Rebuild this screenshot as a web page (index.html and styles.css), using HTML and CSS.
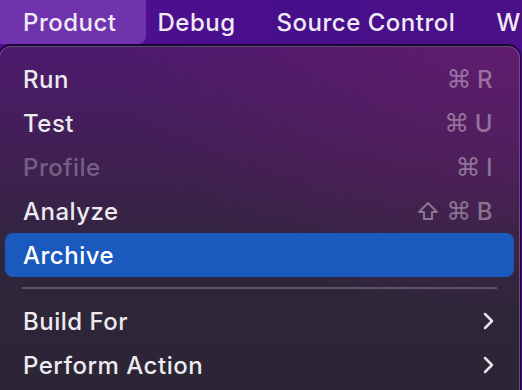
FILE: index.html
```html
<!DOCTYPE html>
<html lang="en">
<head>
    <meta charset="UTF-8">
    <title>Product Menu</title>
    <link rel="stylesheet" href="styles.css">
</head>
<body>
    <div class="menubar">
        <span class="bar-item active">Product</span>
        <span class="bar-item">Debug</span>
        <span class="bar-item">Source Control</span>
        <span class="bar-item">W</span>
    </div>
    <div class="menu">
        <div class="row">
            <span>Run</span>
            <span class="keys"><span class="cmd">⌘</span>R</span>
        </div>
        <div class="row">
            <span>Test</span>
            <span class="keys"><span class="cmd">⌘</span>U</span>
        </div>
        <div class="row disabled">
            <span>Profile</span>
            <span class="keys"><span class="cmd">⌘</span>I</span>
        </div>
        <div class="row">
            <span>Analyze</span>
            <span class="keys">
                <svg class="shift" width="22" height="20" viewBox="0 0 22 20"><path d="M11 2 L20 11 H15 V18 H7 V11 H2 Z" fill="none" stroke="currentColor" stroke-width="2" stroke-linejoin="round"/></svg>
                <span class="cmd">⌘</span>B
            </span>
        </div>
        <div class="row selected">
            <span>Archive</span>
        </div>
        <div class="separator"></div>
        <div class="row">
            <span>Build For</span>
            <svg class="chevron" width="14" height="20" viewBox="0 0 14 20"><path d="M4 3 L11 10 L4 17" fill="none" stroke="#e8e6ec" stroke-width="2.5" stroke-linecap="round" stroke-linejoin="round"/></svg>
        </div>
        <div class="row">
            <span>Perform Action</span>
            <svg class="chevron" width="14" height="20" viewBox="0 0 14 20"><path d="M4 3 L11 10 L4 17" fill="none" stroke="#e8e6ec" stroke-width="2.5" stroke-linecap="round" stroke-linejoin="round"/></svg>
        </div>
    </div>
</body>
</html>
```

FILE: styles.css
```css
html, body {
    height: 390px;
    overflow: hidden;
}
body {
    margin: 0;
    background-color: #4a0f8c;
    font-family: Inter, "Noto Sans", sans-serif;
    color: #ecebef;
}
.menubar {
    display: flex;
    height: 44px;
    background: linear-gradient(90deg, #520f93, #470f8a 60%, #4c1088);
    white-space: nowrap;
    overflow: hidden;
}
.bar-item {
    display: flex;
    align-items: center;
    padding: 0 29px 0 12px;
    font-size: 24px;
    font-weight: 500;
    letter-spacing: 0.5px;
    color: #efeaf5;
}
.bar-item.active {
    padding-left: 23px;
    background-color: #7033ad;
    border-radius: 0 0 8px 0;
}
.menu {
    box-sizing: border-box;
    margin: 2px 2px 0 -1px;
    height: 344px;
    padding: 10px 5px 0;
    border-radius: 12px 12px 0 0;
    border: 1px solid rgba(255, 255, 255, 0.22);
    border-bottom: none;
    box-shadow: 0 -1px 0 1px rgba(20, 0, 40, 0.8);
    background:
        radial-gradient(ellipse at 100% 0%, rgba(110, 30, 110, 0.55), transparent 55%),
        linear-gradient(180deg, #4d1a6e 0%, #3f2050 35%, #30263c 62%, #2c2535 100%);
}
.row {
    display: flex;
    align-items: center;
    justify-content: space-between;
    height: 44px;
    padding: 0 21px 0 18px;
    font-size: 24px;
    font-weight: 500;
    letter-spacing: 0.5px;
    border-radius: 8px;
}
.row.disabled {
    color: rgba(255, 255, 255, 0.3);
}
.row.selected {
    background-color: #1a5abf;
    color: #fff;
}
.keys {
    display: flex;
    align-items: center;
    gap: 5px;
    color: rgba(255, 255, 255, 0.38);
}
.cmd {
    font-family: "DejaVu Sans", sans-serif;
    font-size: 25px;
}
.shift {
    display: block;
    margin-right: 2px;
}
.separator {
    height: 2px;
    margin: 10px 17px 10px 17px;
    background-color: rgba(255, 255, 255, 0.22);
}
.chevron {
    display: block;
    margin-right: -2px;
}
```
